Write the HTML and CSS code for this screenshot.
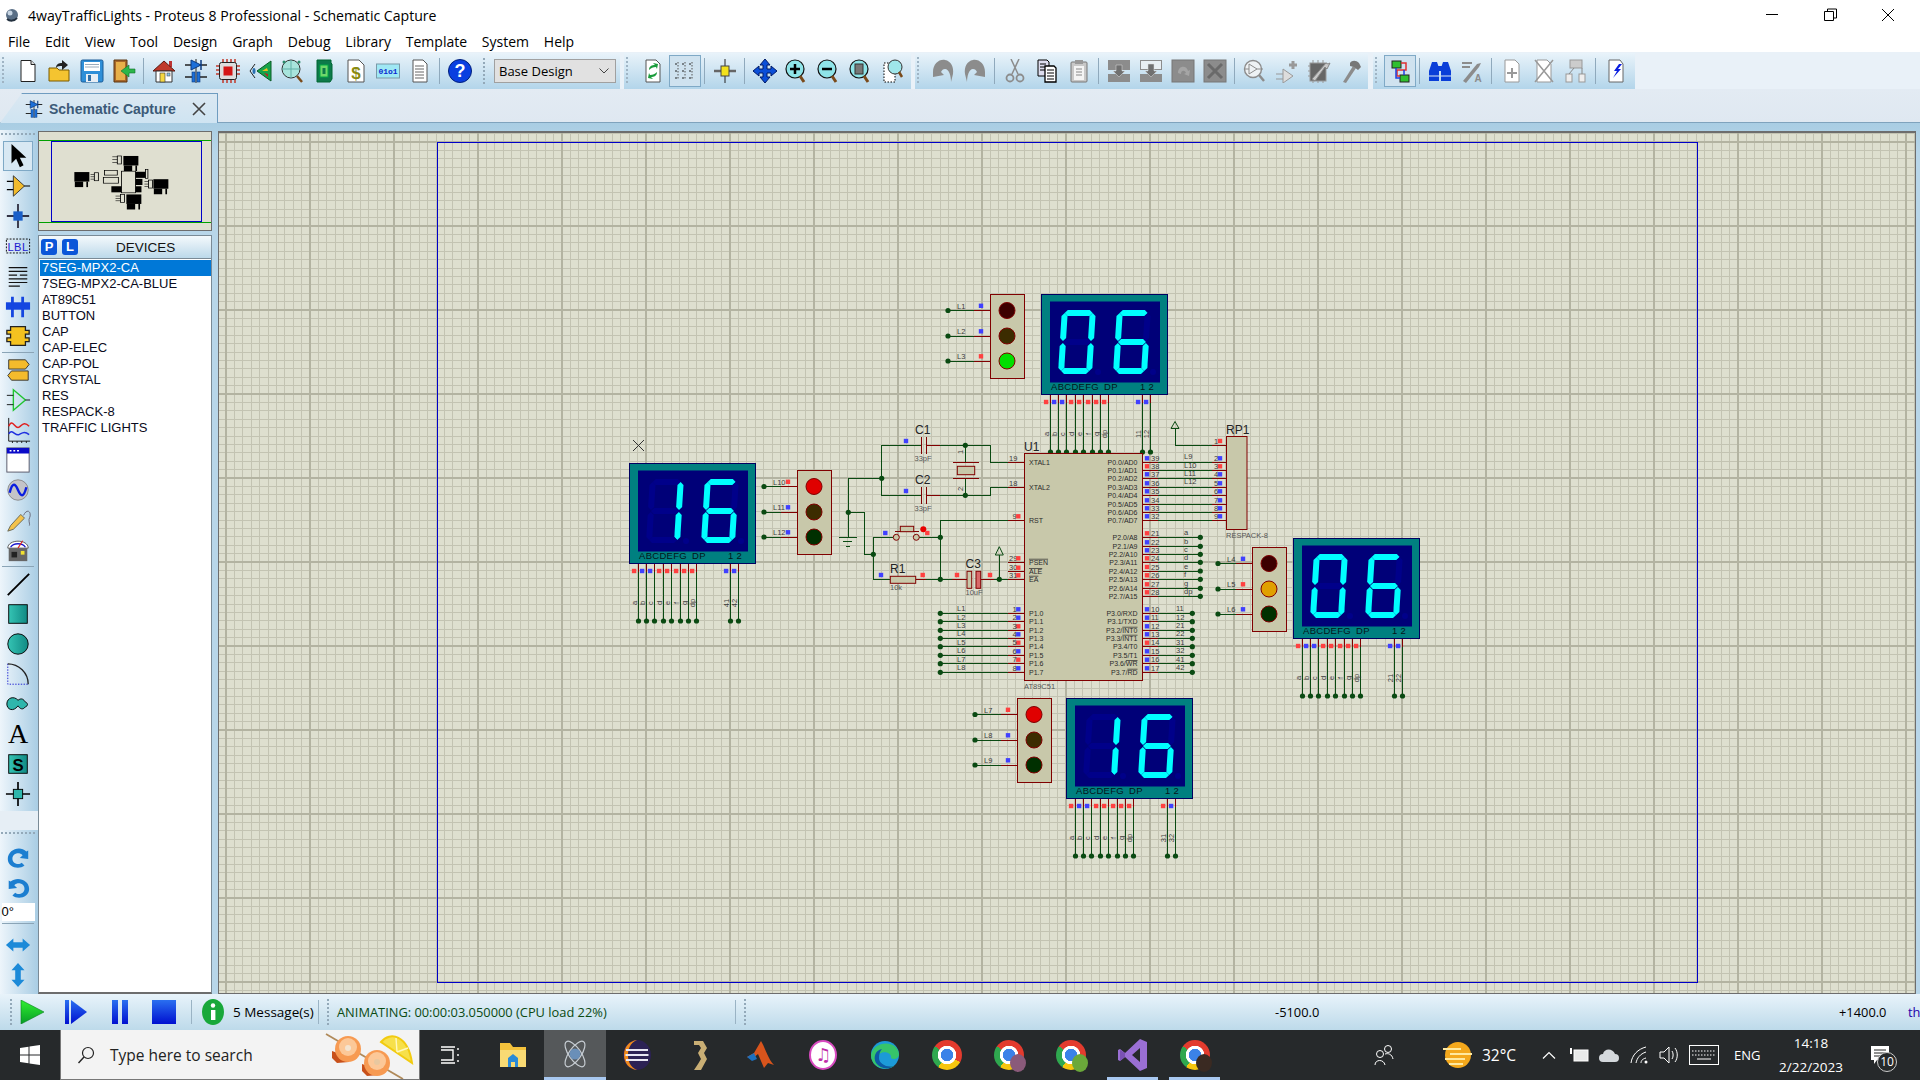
FILE: index.html
```html
<!DOCTYPE html>
<html>
<head>
<title>4wayTrafficLights - Proteus 8 Professional - Schematic Capture</title>
<link rel="stylesheet" href="styles.css">
</head>
<body>

<div class="titlebar">
  <svg class="app-icon" width="16" height="16" viewBox="0 0 16 16"><circle cx="8" cy="8" r="6" fill="#5a6f86"/><circle cx="6" cy="6" r="2.5" fill="#c8d6e4"/><path d="M3 12a7 7 0 0 0 10-1" stroke="#23303e" stroke-width="2" fill="none"/></svg>
  <span class="title-text">4wayTrafficLights - Proteus 8 Professional - Schematic Capture</span>
  <div class="win-controls">
    <svg width="58" height="28" viewBox="0 0 58 28"><path d="M23 13.5h12" stroke="#000"/></svg>
    <svg width="58" height="28" viewBox="0 0 58 28"><path d="M23.500 10.500h9v9h-9zM26.500 10.500v-2.500h9v9h-3" stroke="#000" fill="none"/></svg>
    <svg width="58" height="28" viewBox="0 0 58 28"><path d="M23 8l12 12M35 8l-12 12" stroke="#000"/></svg>
  </div>
</div>

<div class="menubar">
  <span>File</span><span>Edit</span><span>View</span><span>Tool</span><span>Design</span><span>Graph</span><span>Debug</span><span>Library</span><span>Template</span><span>System</span><span>Help</span>
</div>

<div class="toolrow">
  <div class="toolbar tb-file">
    <span class="tool"><svg viewBox="0 0 24 24"><path d="M5 1.500h10l4 4v17H5z" fill="#fff" stroke="#222"/><path d="M15 1.500v4h4" fill="#ddd" stroke="#222"/></svg></span>
    <span class="tool"><svg viewBox="0 0 24 24"><path d="M1 9h8l2 2h10v11H1z" fill="#f4c430" stroke="#7a5a00"/><path d="M8 9c0-4 3-5 6-5V1l6 5-6 5V7c-2 0-5 0-6 2z" fill="#222"/></svg></span>
    <span class="tool"><svg viewBox="0 0 24 24"><rect x="1" y="1" width="22" height="22" rx="1.500" fill="#2f8fd8" stroke="#1a5a96"/><rect x="4" y="3" width="16" height="9" fill="#fff"/><path d="M5 5.500h14M5 8h14" stroke="#9ab"/><rect x="6" y="15" width="12" height="8" fill="#e8eef4"/><rect x="8" y="16" width="3" height="6" fill="#2f6fa8"/></svg></span>
    <span class="tool"><svg viewBox="0 0 24 24"><path d="M2 1h13v22H2z" fill="#a9682a" stroke="#5a3410"/><path d="M4 3h9v18H4z" fill="#e7b04a"/><path d="M23 12h-6V8l-8 6 8 6v-4h6z" transform="translate(0 -2)" fill="#2cb64a" stroke="#12702a" stroke-width=".6"/></svg></span>
    <span class="sep"></span>
    <span class="tool"><svg viewBox="0 0 24 24"><rect x="17" y="2" width="3" height="6" fill="#b33"/><path d="M1 12L12 2l11 10z" fill="#c0392b" stroke="#5a1a10"/><path d="M4 12h16v11H4z" fill="#fff" stroke="#333"/><rect x="8" y="14" width="5" height="9" fill="#f6d743" stroke="#333" stroke-width=".6"/><rect x="15" y="14" width="3" height="3" fill="#8cc8ee" stroke="#333" stroke-width=".5"/></svg></span>
    <span class="tool"><svg viewBox="0 0 24 24"><use href="#ic-schem"/></svg></span>
    <span class="tool"><svg viewBox="0 0 24 24"><path d="M7 0v4M11 0v4M15 0v4M19 0v4M7 20v4M11 20v4M15 20v4M19 20v4M0 7h4M0 11h4M0 15h4M20 7h4M20 11h4M20 15h4" stroke="#c0392b" stroke-width="1.500"/><rect x="3.500" y="3.500" width="17" height="17" rx="2" fill="#ddd" stroke="#222"/><rect x="7.500" y="7.500" width="9" height="9" fill="#d41616"/></svg></span>
    <span class="tool"><svg viewBox="0 0 24 24"><path d="M9 12L23 2v20z" fill="#16a34a" stroke="#0b5a26"/><path d="M14 12l5-3 1 3z" fill="#e8c020"/><path d="M16 14l4 1v3z" fill="#c02020"/><path d="M7 5L2 12l5 7" fill="none" stroke="#222"/><ellipse cx="6" cy="12" rx="1.500" ry="3" fill="#2a6fb0"/></svg></span>
    <span class="tool"><svg viewBox="0 0 24 24"><circle cx="11" cy="10" r="9" fill="#a8e4dc" stroke="#333"/><path d="M11 1v18M2 10h18" stroke="#60b0a8"/><circle cx="4" cy="3" r="1.500" fill="#2a8a6a"/><circle cx="19" cy="3" r="1.500" fill="#2a8a6a"/><path d="M17 17l5 6" stroke="#7a4a1a" stroke-width="2.500"/></svg></span>
    <span class="tool"><svg viewBox="0 0 24 24"><path d="M5 1h14v3l1 1v15l-2 3H5z" fill="#0d7a4a" stroke="#063"/><rect x="8" y="6" width="8" height="12" fill="#6fd86a" stroke="#0a4"/><rect x="10.500" y="9" width="3" height="6" fill="#0d7a4a"/></svg></span>
    <span class="tool"><svg viewBox="0 0 24 24"><path d="M4 1h11l5 5v17H4z" fill="#fff" stroke="#555"/><text x="12" y="20" class="ic-dollar">$</text></svg></span>
    <span class="tool"><svg viewBox="0 0 24 24"><rect x=".500" y="5" width="23" height="14" fill="#9fe8f4" stroke="#7a99a8"/><text x="12" y="15" class="ic-bin">01o1</text></svg></span>
    <span class="tool"><svg viewBox="0 0 24 24"><path d="M5 1h10l4 4v18H5z" fill="#fff" stroke="#555"/><path d="M7 7h9M7 10h9M7 13h9M7 16h9M7 19h9" stroke="#666"/></svg></span>
    <span class="sep"></span>
    <span class="tool tool-help"><svg viewBox="0 0 24 24"><circle cx="12" cy="12" r="11.500" fill="#0a3fe0" stroke="#02207a"/><text x="12" y="18" class="ic-help">?</text></svg></span>
    <span class="grip grip-design"></span>
    <div class="combo"><span>Base Design</span><svg width="10" height="6" viewBox="0 0 10 6"><path d="M.5.5L5 5 9.500.5" fill="none" stroke="#444"/></svg></div>
  </div>

  <div class="toolbar tb-view">
    <span class="tool"><svg viewBox="0 0 24 24"><path d="M5 1h10l4 4v18H5z" fill="#fff" stroke="#555"/><path d="M8 11c0-4 3-5 6-5l-2-2 5 1-1 5-1-2c-3 0-5 1-7 3z" fill="#1c9c3c"/><path d="M16 13c0 4-3 5-6 5l2 2-5-1 1-5 1 2c3 0 5-1 7-3z" fill="#1c9c3c"/></svg></span>
    <span class="tool on"><svg viewBox="0 0 24 24"><path d="M5 3v18M12 3v18M19 3v18" stroke="#555" stroke-dasharray="1.500 1.500"/><path d="M2 5h20M2 12h20M2 19h20" stroke="#222" stroke-dasharray="2 5"/></svg></span>
    <span class="sep"></span>
    <span class="tool"><svg viewBox="0 0 24 24"><path d="M12 0v24" stroke="#222"/><path d="M1 12h22" stroke="#666" stroke-width="2.500"/><rect x="8" y="7" width="8" height="10" fill="#f3e21c" stroke="#444"/></svg></span>
    <span class="sep"></span>
    <span class="tool"><svg viewBox="0 0 24 24"><path d="M12 0l5 6h-3v4h4V7l6 5-6 5v-3h-4v4h3l-5 6-5-6h3v-4H6v3l-6-5 6-5v3h4V6H7z" fill="#0b4fd8" stroke="#001a66"/></svg></span>
    <span class="tool"><svg viewBox="0 0 24 24"><use href="#ic-lens"/><path d="M5 10h10M10 5v10" stroke="#000" stroke-width="2.500"/></svg></span>
    <span class="tool"><svg viewBox="0 0 24 24"><use href="#ic-lens"/><path d="M5 10h10" stroke="#000" stroke-width="2.500"/></svg></span>
    <span class="tool"><svg viewBox="0 0 24 24"><use href="#ic-lens"/><rect x="6" y="5" width="8" height="10" fill="#777" stroke="#333"/></svg></span>
    <span class="tool"><svg viewBox="0 0 24 24"><rect x="3" y="4" width="11" height="19" fill="#fff" stroke="#000" stroke-dasharray="1.500 1.500"/><circle cx="14" cy="8" r="7" fill="#9fe6ea" stroke="#333"/><path d="M18 13l3 5" stroke="#7a4a1a" stroke-width="2.500"/></svg></span>
  </div>

  <div class="toolbar tb-edit">
    <span class="tool"><svg viewBox="0 0 24 24"><path d="M2 13C2 5 8 0 14 1c6 1 9 7 8 14l-2 8c0-6-2-13-6-13-2 0-3 1-4 3l3 3-11 2z" fill="#8c8c8c"/></svg></span>
    <span class="tool"><svg viewBox="0 0 24 24"><path d="M22 13C22 5 16 0 10 1 4 2 1 8 2 15l2 8c0-6 2-13 6-13 2 0 3 1 4 3l-3 3 11 2z" fill="#8c8c8c"/></svg></span>
    <span class="sep"></span>
    <span class="tool"><svg viewBox="0 0 24 24"><path d="M8 0l7 15M16 0L9 15" stroke="#8c8c8c" stroke-width="1.500"/><circle cx="7" cy="19" r="3.500" fill="none" stroke="#8c8c8c" stroke-width="1.800"/><circle cx="17" cy="19" r="3.500" fill="none" stroke="#8c8c8c" stroke-width="1.800"/></svg></span>
    <span class="tool"><svg viewBox="0 0 24 24"><path d="M3 1h9l2 2v14H3z" fill="#dde" stroke="#000"/><path d="M5 5h6M5 8h6M5 11h6" stroke="#000"/><path d="M10 7h9l2 2v14H10z" fill="#fff" stroke="#000" stroke-width="1.300"/><path d="M12 11h7M12 14h7M12 17h7M12 20h7" stroke="#000"/></svg></span>
    <span class="tool"><svg viewBox="0 0 24 24"><rect x="4" y="3" width="16" height="20" rx="1" fill="#c8c8c8" stroke="#777"/><rect x="8" y="1" width="8" height="4" fill="#999"/><rect x="7" y="7" width="10" height="14" fill="#f4f4f4"/><path d="M9 10h6M9 13h6M9 16h6" stroke="#888"/></svg></span>
    <span class="sep"></span>
    <span class="tool"><svg viewBox="0 0 24 24"><rect x="1" y="1" width="22" height="10" fill="#8c8c8c"/><rect x="1" y="15" width="22" height="8" fill="#8c8c8c"/><path d="M9 6h6v6h3l-6 6-6-6h3z" fill="#707070" stroke="#ddd" stroke-width=".5"/></svg></span>
    <span class="tool"><svg viewBox="0 0 24 24"><rect x="1.500" y="1.500" width="21" height="9" fill="#e8eef2" stroke="#8c8c8c"/><rect x="1" y="15" width="22" height="8" fill="#8c8c8c"/><path d="M9 5h6v7h3l-6 6-6-6h3z" fill="#707070" stroke="#ddd" stroke-width=".5"/></svg></span>
    <span class="tool"><svg viewBox="0 0 24 24"><rect x="1" y="1" width="22" height="22" fill="#8c8c8c" stroke="#777"/><path d="M7 14c0-8 9-8 10-2l2-1-1 6-5-2 2-1c-1-3-5-3-5 1z" fill="#a5a5a5"/></svg></span>
    <span class="tool"><svg viewBox="0 0 24 24"><rect x="1" y="1" width="22" height="22" fill="#8c8c8c" stroke="#777"/><path d="M5 5l14 14M19 5L5 19" stroke="#6a6a6a" stroke-width="3"/></svg></span>
    <span class="sep"></span>
    <span class="tool"><svg viewBox="0 0 24 24"><circle cx="10" cy="10" r="8.500" fill="#eef2f4" stroke="#8c8c8c" stroke-width="1.400"/><path d="M6 5l8 5-8 5zM2 10h4M14 10h6" fill="none" stroke="#8c8c8c"/><path d="M16 16l5 6" stroke="#8c8c8c" stroke-width="2.500"/></svg></span>
    <span class="tool"><svg viewBox="0 0 24 24"><path d="M8 10l10 7-10 7z" fill="#ddd" stroke="#999"/><path d="M1 15h7M1 20h7" stroke="#999"/><path d="M14 6h8M18 2v8" stroke="#999" stroke-width="3"/></svg></span>
    <span class="tool"><svg viewBox="0 0 24 24"><rect x="3" y="4" width="16" height="18" fill="#666" stroke="#999"/><path d="M1 7h2M1 12h2M1 17h2M6 1v3M11 1v3M16 1v3M6 22v2M11 22v2M16 22v2" stroke="#999"/><path d="M5 20L19 4l2 1 2-1-3 6-2-2L8 22z" fill="#c8c8c8" stroke="#888"/></svg></span>
    <span class="tool"><svg viewBox="0 0 24 24"><path d="M4 23L14 7l3 2L7 24z" fill="#8c8c8c"/><path d="M11 4c2-3 6-3 9 0l2 4-3 3-4-3-4-1z" fill="#777"/></svg></span>
  </div>

  <div class="toolbar tb-sheet">
    <span class="tool on"><svg viewBox="0 0 24 24"><rect x="4" y="2" width="9" height="7" fill="#30c030" stroke="#222"/><rect x="12" y="16" width="9" height="7" fill="#30c030" stroke="#222"/><path d="M13 4h5v7h-9v6h3" fill="none" stroke="#e03030" stroke-width="1.500"/><path d="M8 9v10h4M16 16v-5" fill="none" stroke="#2040e0" stroke-width="1.500"/></svg></span>
    <span class="sep"></span>
    <span class="tool"><svg viewBox="0 0 24 24"><path d="M4 3h5l2 6v13H1V12z" fill="#0a3ed8"/><path d="M20 3h-5l-2 6v13h10V12z" fill="#0a3ed8"/><path d="M1 17h10M13 17h10" stroke="#dce8f4"/><rect x="10" y="7" width="4" height="5" fill="#0a3ed8"/></svg></span>
    <span class="tool"><svg viewBox="0 0 24 24"><path d="M3 22L17 5l4-1-2 4L6 24z" fill="#8c8c8c"/><path d="M2 4h10M2 8h8" stroke="#8c8c8c" stroke-width="2"/><text x="18" y="23" class="ic-a">A</text></svg></span>
    <span class="sep"></span>
    <span class="tool"><svg viewBox="0 0 24 24"><path d="M5 1h10l4 4v18H5z" fill="#fff" stroke="#999"/><path d="M7 14h10M12 9v10" stroke="#999" stroke-width="2"/></svg></span>
    <span class="tool"><svg viewBox="0 0 24 24"><path d="M5 1h10l4 4v18H5z" fill="#fff" stroke="#999"/><path d="M3 1l18 22M21 1L3 23" stroke="#999" stroke-width="1.500"/></svg></span>
    <span class="tool"><svg viewBox="0 0 24 24"><rect x="6" y="1" width="12" height="8" fill="#ccc" stroke="#999"/><rect x="2" y="15" width="6" height="8" fill="#eee" stroke="#999"/><rect x="15" y="15" width="6" height="8" fill="#eee" stroke="#999"/><path d="M10 9l-5 6M18 9v6" stroke="#888"/></svg></span>
    <span class="sep"></span>
    <span class="tool"><svg viewBox="0 0 24 24"><path d="M5 1h11l3 4v18H5z" fill="#fff" stroke="#666"/><path d="M15 5l-5 7h3l-4 7 8-9h-3l4-5z" fill="#0a1ee0"/></svg></span>
  </div>
</div>

<svg class="defs" width="0" height="0">
  <defs>
    <g id="ic-schem">
      <path d="M12 0v24" stroke="#222" stroke-width="1"/>
      <path d="M1 6h22M1 18h7M16 18h7" stroke="#222" stroke-width="1.300"/>
      <path d="M7 1l10 5-10 5z" fill="#1c6fd8" stroke="#0a3a80"/>
      <path d="M17 1v10" stroke="#0a3a80" stroke-width="1.500"/>
      <rect x="8" y="13" width="3" height="10" fill="#1c6fd8" stroke="#0a3a80" stroke-width=".6"/>
      <rect x="13" y="13" width="3" height="10" fill="#1c6fd8" stroke="#0a3a80" stroke-width=".6"/>
    </g>
    <g id="ic-lens">
      <circle cx="10" cy="10" r="9" fill="#8fe4e8" stroke="#111" stroke-width="1.200"/>
      <path d="M15 17l4 6" stroke="#7a4a1a" stroke-width="3"/>
    </g>
    <linearGradient id="teal" x1="0" x2="1"><stop offset="0" stop-color="#35c4b4"/><stop offset="1" stop-color="#108a84"/></linearGradient>
    <linearGradient id="blue-v" x1="0" x2="0" y2="1"><stop offset="0" stop-color="#2a6ff0"/><stop offset="1" stop-color="#0010d0"/></linearGradient>
    <linearGradient id="green-v" x1="0" x2="0" y2="1"><stop offset="0" stop-color="#30f030"/><stop offset="1" stop-color="#089c28"/></linearGradient>
  </defs>
</svg>

<div class="tabrow">
  <div class="tab">
    <svg width="18" height="20" viewBox="0 0 24 24"><use href="#ic-schem"/></svg>
    <span class="tab-label">Schematic Capture</span>
    <svg width="14" height="14" viewBox="0 0 14 14"><path d="M1 1l12 12M13 1L1 13" stroke="#444" stroke-width="1.600"/></svg>
  </div>
</div>

<div class="workspace">
  <div class="modebar">
    <span class="grip-h"></span>
    <span class="mode on"><svg viewBox="0 0 28 28"><path d="M7 1v21l5-5 4 9 4-2-4-8h7z" fill="#000"/></svg></span>
    <span class="mode"><svg viewBox="0 0 28 28"><path d="M2 9h8M2 18h8M20 14h7" stroke="#000" stroke-width="1.300"/><path d="M9 3l12 11L9 25z" fill="#f2bb2c" stroke="#333"/></svg></span>
    <span class="mode"><svg viewBox="0 0 28 28"><path d="M14 1v26M2 14h24" stroke="#334" stroke-width="2"/><rect x="9" y="9" width="10" height="10" fill="#1a5fc8"/></svg></span>
    <span class="mode"><svg viewBox="0 0 28 28"><rect x="1.500" y="6.500" width="25" height="15" fill="none" stroke="#000" stroke-dasharray="2 1.500"/><text x="14" y="19" class="ic-lbl">LBL</text></svg></span>
    <span class="mode"><svg viewBox="0 0 28 28"><path d="M4 5h20M4 9h20M4 13h9M16 13h8M4 17h20M4 21h20M4 25h12" stroke="#111" stroke-width="1.300"/></svg></span>
    <span class="mode"><svg viewBox="0 0 28 28"><rect x="1" y="10" width="26" height="8" fill="#1446e0"/><path d="M8 4v22M19 4v22" stroke="#1446e0" stroke-width="3"/></svg></span>
    <span class="mode"><svg viewBox="0 0 28 28"><path d="M6 4h16v4h4v4h-4v4h4v4h-4v4H6v-4H2v-4h4v-4H2V8h4z" fill="#f4c220" stroke="#222" stroke-width="1.400"/></svg></span>
    <span class="hr hr-top"></span>
    <span class="mode"><svg viewBox="0 0 28 28"><path d="M4 3h18l4 5-4 5H4z" fill="#f4bb2c" stroke="#333"/><path d="M25 15H7l-4 5 4 5h18z" fill="#f4bb2c" stroke="#333"/></svg></span>
    <span class="mode"><svg viewBox="0 0 28 28"><path d="M9 3l13 11L9 25z" fill="none" stroke="#1fc431" stroke-width="1.500"/><path d="M2 9h7M2 19h7M22 14h5" stroke="#111"/></svg></span>
    <span class="mode"><svg viewBox="0 0 28 28"><path d="M4 1v25h23M8 26v2M13 26v2M18 26v2M23 26v2" stroke="#111" fill="none"/><path d="M4 10c4-10 7 4 11 1s6-6 11-1" stroke="#e02020" fill="none" stroke-width="1.600"/><path d="M4 18c4-6 7 3 11 1s6-4 11 0" stroke="#2030e0" fill="none" stroke-width="1.600"/></svg></span>
    <span class="mode"><svg viewBox="0 0 28 28"><rect x="2" y="1" width="24" height="26" fill="#fff" stroke="#556"/><rect x="2" y="1" width="24" height="6" fill="#0a0ac8"/><path d="M5 4h2M9 4h2M13 4h2" stroke="#fff" stroke-width="1.500"/></svg></span>
    <span class="mode"><svg viewBox="0 0 28 28"><circle cx="14" cy="14" r="11" fill="#c4c4c8" stroke="#888"/><path d="M5 17c3-12 6-10 9-3s6 9 9-3" stroke="#0a1ee0" stroke-width="2.600" fill="none"/></svg></span>
    <span class="mode"><svg viewBox="0 0 28 28"><path d="M3 26l3-6L17 8l4 4L9 24z" fill="#f4c24a" stroke="#665"/><path d="M20 9c2-5 6-6 7-2s-2 5-1 9 0 4 0 4" stroke="#667" fill="none"/></svg></span>
    <span class="mode"><svg viewBox="0 0 28 28"><path d="M3 12C3 2 25 2 25 12z" fill="#fff" stroke="#555"/><path d="M6 11c3-5 13-5 16 0" fill="none" stroke="#1a1ad0" stroke-width="1.400"/><path d="M14 12l5-8" stroke="#e02020" stroke-width="1.200"/><rect x="4" y="12" width="20" height="14" fill="#666"/><rect x="7" y="16" width="6" height="6" fill="#222"/><rect x="17" y="15" width="4" height="4" fill="#f0e030"/></svg></span>
    <span class="hr hr-low"></span>
    <span class="mode"><svg viewBox="0 0 28 28"><path d="M3 26L26 3" stroke="#000" stroke-width="2"/></svg></span>
    <span class="mode"><svg viewBox="0 0 28 28"><rect x="4" y="4" width="20" height="20" fill="url(#teal)" stroke="#000"/></svg></span>
    <span class="mode"><svg viewBox="0 0 28 28"><circle cx="14" cy="14" r="11" fill="url(#teal)" stroke="#000"/></svg></span>
    <span class="mode"><svg viewBox="0 0 28 28"><path d="M3 3v22h22" fill="none" stroke="#1a1ad0" stroke-dasharray="1.500 1.500"/><path d="M3 3c12 0 22 10 22 22" fill="none" stroke="#222" stroke-width="1.400"/></svg></span>
    <span class="mode"><svg viewBox="0 0 28 28"><path d="M2 14c0-7 8-9 12-4 4-3 6-1 8 2 3 1 3 4 0 5-3 4-6 2-8-1-5 7-12 4-12-2z" fill="#2fb6ac" stroke="#000"/></svg></span>
    <span class="mode"><span class="ic-big-a">A</span></span>
    <span class="mode"><svg viewBox="0 0 28 28"><rect x="4" y="4" width="20" height="20" fill="url(#teal)" stroke="#000"/><text x="14" y="21" class="ic-s">S</text></svg></span>
    <span class="mode"><svg viewBox="0 0 28 28"><path d="M14 1v26M1 14h26" stroke="#000" stroke-width="1.800"/><rect x="9" y="9" width="10" height="10" fill="#2fb6ac" stroke="#000"/></svg></span>
    <span class="strip"></span>
    <span class="grip-h"></span>
    <span class="mode mode-first"><svg viewBox="0 0 28 28"><path d="M23 7C16 0 3 5 3 15c0 9 12 12 18 7l-3-3c-3 3-10 1-10-4 0-6 7-8 11-4l-3 3 9 1V6z" fill="#1c7ed0"/></svg></span>
    <span class="mode"><svg viewBox="0 0 28 28"><path d="M6 7c7-6 20-2 20 8 0 9-12 12-18 7l3-3c3 3 10 1 10-4 0-6-7-8-11-4l3 3-9 1V6z" fill="#1c7ed0"/></svg></span>
    <span class="angle">0°</span>
    <span class="hr"></span>
    <span class="mode mode-flip"><svg viewBox="0 0 28 28"><path d="M1 14l8-7v4h10V7l8 7-8 7v-4H9v4z" fill="#1c8ad8"/></svg></span>
    <span class="mode"><svg viewBox="0 0 28 28"><path d="M14 1l7 8h-4v10h4l-7 8-7-8h4V9H7z" fill="#1c8ad8"/></svg></span>
  </div>

  <div class="sidepanel">
    <div class="preview">
      <svg width="172" height="98" viewBox="0 0 172 98">
        <path d="M0 8.500h172M0 90.500h172" stroke="#00a000"/>
        <rect x="12.500" y="9.500" width="150" height="80" fill="none" stroke="#0000c8"/>
        <g class="mini" transform="translate(12.500 9.500) scale(.119 .0952) translate(-437 -142)">
          <rect x="629" y="463" width="126" height="100"/><rect x="633" y="563" width="70" height="58"/><rect x="730" y="563" width="14" height="58"/>
          <rect x="1041" y="294" width="126" height="100"/><rect x="1045" y="394" width="70" height="58"/><rect x="1142" y="394" width="14" height="58"/>
          <rect x="1293" y="538" width="126" height="100"/><rect x="1297" y="638" width="70" height="58"/><rect x="1394" y="638" width="14" height="58"/>
          <rect x="1066" y="698" width="126" height="100"/><rect x="1070" y="798" width="70" height="58"/><rect x="1167" y="798" width="14" height="58"/>
          <rect class="mini-box" x="990" y="294" width="34" height="84"/><rect class="mini-box" x="797" y="470" width="34" height="84"/>
          <rect class="mini-box" x="1252" y="547" width="33" height="84"/><rect class="mini-box" x="1017" y="698" width="33" height="84"/>
          <rect x="948" y="300" width="42" height="6"/><rect x="948" y="330" width="42" height="6"/><rect x="948" y="358" width="42" height="6"/>
          <rect x="765" y="484" width="32" height="6"/><rect x="765" y="510" width="32" height="6"/><rect x="765" y="534" width="32" height="6"/>
          <rect x="1218" y="560" width="34" height="6"/><rect x="1218" y="586" width="34" height="6"/><rect x="1218" y="610" width="34" height="6"/>
          <rect x="975" y="712" width="42" height="6"/><rect x="975" y="738" width="42" height="6"/><rect x="975" y="762" width="42" height="6"/>
          <rect class="mini-box" x="1025" y="454" width="118" height="227"/>
          <rect x="1143" y="460" width="84" height="64"/><rect class="mini-box" x="1227" y="437" width="20" height="92"/>
          <rect x="1143" y="535" width="58" height="64"/><rect x="1143" y="612" width="50" height="64"/><rect x="940" y="612" width="84" height="64"/>
          <rect class="mini-box" x="882" y="445" width="108" height="50"/><rect class="mini-box" x="873" y="520" width="126" height="60"/>
        </g>
      </svg>
    </div>
    <div class="devices">
      <div class="devices-head">
        <span class="badge">P</span><span class="badge">L</span>
        <span class="devices-title">DEVICES</span>
      </div>
      <ul class="device-list">
        <li class="selected">7SEG-MPX2-CA</li>
        <li>7SEG-MPX2-CA-BLUE</li>
        <li>AT89C51</li>
        <li>BUTTON</li>
        <li>CAP</li>
        <li>CAP-ELEC</li>
        <li>CAP-POL</li>
        <li>CRYSTAL</li>
        <li>RES</li>
        <li>RESPACK-8</li>
        <li>TRAFFIC LIGHTS</li>
      </ul>
    </div>
  </div>

  <div class="sheet">
    <svg id="sheet" width="1696" height="861" viewBox="219 132 1696 861"></svg>
  </div>
</div>

<div class="statusbar">
  <span class="grip"></span>
  <svg class="play" width="24" height="24" viewBox="0 0 24 24"><path d="M1 0l23 12L1 24z" fill="url(#green-v)" stroke="#0a8020" stroke-width=".6"/></svg>
  <svg class="play" width="24" height="24" viewBox="0 0 24 24"><path d="M1 0h4v24H1z" fill="url(#blue-v)"/><path d="M7 0l16 12L7 24z" fill="url(#blue-v)"/></svg>
  <svg class="play" width="24" height="24" viewBox="0 0 24 24"><path d="M4 0h6v24H4zM14 0h6v24h-6z" fill="url(#blue-v)"/></svg>
  <svg class="play play-last" width="24" height="24" viewBox="0 0 24 24"><rect y="0" width="24" height="24" fill="url(#blue-v)"/></svg>
  <span class="status-sep"></span>
  <svg class="info" width="24" height="26" viewBox="0 0 24 26"><ellipse cx="12" cy="13" rx="11" ry="13" fill="#18a83a"/><circle cx="12" cy="6.500" r="2.200" fill="#fff"/><path d="M10 11h4.400v10H10z" fill="#fff"/></svg>
  <span class="messages">5 Message(s)</span>
  <span class="status-sep"></span>
  <span class="grip"></span>
  <span class="anim">ANIMATING: 00:00:03.050000 (CPU load 22%)</span>
  <span class="status-sep"></span>
  <span class="grip"></span>
  <span class="coord-x">-5100.0</span>
  <span class="coord-y">+1400.0</span>
  <span class="unit">th</span>
</div>

<div class="taskbar">
  <div class="start"><svg width="20" height="20" viewBox="0 0 20 20"><path d="M0 3l8.500-1.200v7.700H0zM9.500 1.600L20 0v9.500H9.500zM0 10.500h8.500v7.700L0 17zM9.500 10.500H20V20L9.500 18.400z" fill="#fff"/></svg></div>
  <div class="search">
    <svg width="18" height="18" viewBox="0 0 18 18"><circle cx="11" cy="7" r="5.500" fill="none" stroke="#222" stroke-width="1.200"/><path d="M7 11l-5.500 6" stroke="#222" stroke-width="1.400"/></svg>
    <span class="search-text">Type here to search</span>
    <svg class="search-art" width="92" height="49" viewBox="0 0 92 49">
      <path d="M2 4l77 45" stroke="#b08a5a" stroke-width="1.800"/>
      <path d="M8 21l14 5 3 6-12 1-5-5z" fill="#c8501a"/>
      <circle cx="24" cy="19" r="13" fill="#f79a52"/><circle cx="24" cy="17" r="9" fill="#fcc898"/><circle cx="24" cy="18" r="3" fill="#f4e4d0"/>
      <path d="M38 34l14 5 3 6-12 1-5-5z" fill="#c8501a"/>
      <circle cx="53" cy="33" r="13" fill="#f79a52"/><circle cx="53" cy="31" r="9" fill="#fcc898"/><circle cx="53" cy="32" r="3" fill="#e8c8a0"/>
      <path d="M57 12C66 1 84 5 88 33z" fill="#f7e04a" stroke="#f2cb10" stroke-width="2"/><path d="M72 8l1 14M84 18L73 22" stroke="#fff8c0" stroke-width="1.400"/>
    </svg>
  </div>
  <span class="task"><svg width="20" height="20" viewBox="0 0 20 20"><path d="M0 2h14M0 18h14M0 5h12v10H0M17 3v2M17 9v2M17 15v2" fill="none" stroke="#fff" stroke-width="1.400"/></svg></span>
  <span class="task"><svg width="28" height="26" viewBox="0 0 28 26"><path d="M1 1h10l3 4h13v20H1z" fill="#f4c23c"/><path d="M1 8h26v17H1z" fill="#f9da73"/><path d="M9 16l5-4 5 4v9h-3v-5h-4v5H9z" fill="#2a8ad8"/></svg></span>
  <span class="task task-active"><svg width="30" height="30" viewBox="0 0 30 30"><g fill="none" stroke="#c6ccd2" stroke-width="1.200"><ellipse cx="15" cy="15" rx="6" ry="15" transform="rotate(-35 15 15)"/><ellipse cx="15" cy="15" rx="6" ry="15" transform="rotate(35 15 15)"/></g><circle cx="15" cy="15" r="5.500" fill="#6a8fb8"/></svg></span>
  <span class="task"><svg width="30" height="32" viewBox="0 0 30 32"><ellipse cx="15" cy="16" rx="14" ry="15" fill="#2c2255"/><path d="M2 16C2 8 7 2 15 1 8 4 6 10 6 16s2 12 9 15C7 30 2 24 2 16z" fill="#f08a1c"/><path d="M4 11h22M3.500 16h23M4 21h22" stroke="#e8e8f4" stroke-width="2.200"/></svg></span>
  <span class="task"><svg width="18" height="32" viewBox="0 0 18 32"><path d="M4 2h9l4 7-3 5 3 6-6 11H4l4-6 3-5-3-6 3-5-2-3H4z" fill="#c9ae74"/></svg></span>
  <span class="task"><svg width="30" height="30" viewBox="0 0 30 30"><path d="M1 17l7-4 7-12c4 6 7 18 13 24l-6-2-4 5-6-14-6 5z" fill="#d8541c"/><path d="M1 17l7-4 3 6-5 2z" fill="#1c70c0"/></svg></span>
  <span class="task"><span class="itunes">&#9835;</span></span>
  <span class="task"><svg width="30" height="30" viewBox="0 0 30 30"><circle cx="15" cy="15" r="14" fill="#1c9ad8"/><path d="M1 15C3 1 27-1 29 14c0 5-6 6-8 4 1-7-13-8-13 0 0 5 8 11 16 8-6 5-23 3-23-11z" fill="#36c46a"/><path d="M9 18c0 6 8 10 15 8-5 4-14 3-18-3-3-5-1-13 6-14-2 2-3 5-3 9z" fill="#0c59a4"/></svg></span>
  <span class="task"><span class="chrome"></span></span>
  <span class="task"><span class="chrome"><span class="chrome-badge badge-a"></span></span></span>
  <span class="task"><span class="chrome"><span class="chrome-badge badge-b"></span></span></span>
  <span class="task task-open"><svg width="30" height="32" viewBox="0 0 30 32"><path d="M22 0l7 3v26l-7 3-15-14-5 4-2-1V11l2-1 5 4zM22 9l-8 7 8 7z" fill="#9a6fd4"/><path d="M2 11l5 3v4l-5 4z" fill="#7a52b4"/></svg></span>
  <span class="task task-open"><span class="chrome"><span class="chrome-badge badge-c"></span></span></span>

  <div class="tray">
    <span class="tray-people"><svg width="20" height="22" viewBox="0 0 20 22"><circle cx="6" cy="10" r="3.500" fill="none" stroke="#fff"/><path d="M1 21c0-6 9-6 10 0" fill="none" stroke="#fff"/><circle cx="14" cy="5" r="3.500" fill="none" stroke="#fff"/><path d="M11 10c3-1 7 0 8 5" fill="none" stroke="#fff"/></svg></span>
    <span class="tray-weather"><svg width="30" height="28" viewBox="0 0 30 28"><circle cx="15" cy="14" r="13" fill="#f4a81c"/><path d="M0 8h18M7 13h22M2 18h20M6 23h14" stroke="#ffe9a0" stroke-width="2"/></svg></span>
    <span class="tray-temp">32°C</span>
    <span class="tray-icon tray-first"><svg width="14" height="8" viewBox="0 0 14 8"><path d="M1 7.500l6-6 6 6" fill="none" stroke="#fff" stroke-width="1.200"/></svg></span>
    <span class="tray-icon"><svg width="20" height="16" viewBox="0 0 20 16"><rect x="5" y="3" width="14" height="11" fill="#fff" fill-opacity=".9" stroke="#fff"/><path d="M2 1v6" stroke="#fff" stroke-width="2"/></svg></span>
    <span class="tray-icon"><svg width="22" height="16" viewBox="0 0 22 16"><path d="M5 15a4 4 0 0 1 0-8c1-6 10-6 12 0a4 4 0 0 1 0 8z" fill="#d4d8dc"/></svg></span>
    <span class="tray-icon"><svg width="20" height="18" viewBox="0 0 20 18"><path d="M2 17C3 9 9 3 17 1M7 17c1-5 4-9 10-11M12 17c0-2 1-4 5-5" fill="none" stroke="#fff"/><circle cx="17" cy="16" r="1.500" fill="#fff"/></svg></span>
    <span class="tray-icon"><svg width="20" height="20" viewBox="0 0 20 20"><path d="M1 7h4l5-5v16l-5-5H1z" fill="none" stroke="#fff"/><path d="M13 6c1.500 2 1.500 6 0 8M16 3c3 4 3 10 0 14" fill="none" stroke="#fff"/></svg></span>
    <span class="tray-kbd"><svg width="30" height="20" viewBox="0 0 30 20"><rect x=".5" y=".5" width="29" height="19" fill="none" stroke="#fff"/><path d="M3 6h24M3 10h24" stroke="#fff" stroke-dasharray="1.500 1.500"/><path d="M8 14h14" stroke="#fff"/></svg></span>
    <span class="tray-lang">ENG</span>
    <span class="clock"><span>14:18</span><span>2/22/2023</span></span>
    <span class="notify"><svg width="20" height="20" viewBox="0 0 20 20"><path d="M1 1h18v14H7l-3 4v-4H1z" fill="#fff"/><path d="M4 5h12M4 8h12M4 11h8" stroke="#222"/></svg><span class="notify-count">10</span></span>
  </div>
</div>

<script src="script.js"></script>
</body>
</html>
```

FILE: styles.css
```css
html, body { margin: 0; padding: 0; }
body { width: 1920px; height: 1080px; overflow: hidden; display: flex; flex-direction: column; background: #fff; color: #000; font-family: "Open Sans", "Noto Sans", sans-serif; }
.defs { position: absolute; }

/* window chrome */
.titlebar { height: 30px; display: flex; align-items: center; padding-left: 4px; background: #fff; flex: none; }
.app-icon { margin-right: 8px; }
.title-text { font-size: 14.100px; }
.win-controls { margin-left: auto; display: flex; gap: 0; margin-right: 3px; }
.menubar { height: 22px; display: flex; align-items: center; gap: 14.800px; padding-left: 8px; font-size: 14px; background: #fff; flex: none; }

/* toolbars */
.toolrow { height: 37px; flex: none; display: flex; background: #e9f1f8; }
.toolbar { display: flex; align-items: center; height: 36px; margin-top: 1px; background: linear-gradient(#e9f3fa, #b3d5ea); background-repeat: no-repeat; position: relative; }
.toolbar::before { content: ""; position: absolute; left: 2px; top: 4px; bottom: 4px; width: 2px; background: repeating-linear-gradient(#9fb4c4 0 2px, transparent 2px 4px); }
.tb-file { width: 620px; padding-left: 12px; box-sizing: border-box; }
.tb-view { width: 287px; margin-left: 4px; padding-left: 13px; box-sizing: border-box; }
.tb-edit { width: 453px; margin-left: 4px; padding-left: 12px; box-sizing: border-box; }
.tb-sheet { width: 262px; margin-left: 5px; padding-left: 11px; box-sizing: border-box; }
.tool { width: 32px; height: 32px; box-sizing: border-box; display: flex; align-items: center; justify-content: center; flex: none; }
.tool svg { width: 24px; height: 24px; }
.tool.on { background: #cfe2ef; border: 1px solid #7fa9c6; }
.sep { width: 1px; height: 26px; margin: 0 4px 0 3px; background: #8fa9bc; flex: none; }
.grip { width: 2px; height: 26px; background: repeating-linear-gradient(#93a9b9 0 2px, transparent 2px 4px); flex: none; }
.grip-design { margin: 0 9px 0 7px; }
.combo { width: 122px; height: 24px; box-sizing: border-box; background: #e1e1e1; border: 1px solid #a0a0a0; display: flex; align-items: center; justify-content: space-between; padding: 0 6px 0 4px; font-size: 13px; }
.ic-dollar { font: bold 17px "Liberation Sans", sans-serif; fill: #8a8a10; text-anchor: middle; }
.ic-bin { font: bold 8px "Liberation Mono", monospace; fill: #0a2ad0; text-anchor: middle; }
.ic-help { font: bold 18px "Liberation Sans", sans-serif; fill: #fff; text-anchor: middle; }
.ic-a { font: bold 10px "Liberation Sans", sans-serif; fill: #8c8c8c; text-anchor: middle; }

/* tab strip */
.tabrow { height: 34px; flex: none; box-sizing: border-box; background: linear-gradient(#e3ebf3, #dfe8f1); border-bottom: 1px solid #7fa3bd; display: flex; align-items: flex-end; }
.tab { width: 218px; height: 30px; box-sizing: border-box; display: flex; align-items: center; padding-left: 25px; gap: 6px; margin-bottom: -1px; background: linear-gradient(#dbe8f2, #cfe4f2); border: 1px solid #6f9cc0; border-bottom: none; border-left: none; clip-path: polygon(0 100%, 22px 0, 100% 0, 100% 100%); }
.tab-label { font: bold 14px "Liberation Sans", sans-serif; color: #3c5a78; width: 137px; }

/* main area */
.workspace { height: 871px; flex: none; box-sizing: border-box; padding-top: 8px; display: flex; background: linear-gradient(#a9cde3, #b8d6e9 30px); }
.modebar { width: 38px; box-sizing: border-box; padding-right: 2px; flex: none; display: flex; flex-direction: column; align-items: center; margin-top: -1px; background: linear-gradient(90deg, #edf5fb, #a9cde4); }
.grip-h { width: 34px; height: 2px; margin-top: 2px; background: repeating-linear-gradient(90deg, #93a9b9 0 2px, transparent 2px 4px); flex: none; }
.mode { width: 30px; height: 30px; box-sizing: border-box; display: flex; align-items: center; justify-content: center; flex: none; }
.mode svg { width: 26px; height: 26px; }
.modebar > .grip-h:first-child { margin-top: 3px; margin-bottom: 6px; }
.mode.on { background: #d8e8f3; border: 1px solid #7fa9c6; }
.mode-first { margin-top: 9px; }
.mode-flip { margin-top: 3px; }
.hr { width: 32px; height: 1px; margin: 2px 0 3px; background: #8aa4b6; flex: none; }
.hr-top { margin: 1px 0 2px; }
.hr-low { margin: 1px 0 2px; }
.strip { width: 38px; height: 19px; margin-top: 2px; background: #e6eef5; flex: none; align-self: flex-start; }
.angle { width: 33px; height: 18px; box-sizing: border-box; background: #fff; font: 13px "Liberation Sans", sans-serif; line-height: 18px; flex: none; }
.ic-big-a { font: 28px/28px "Liberation Serif", serif; }
.ic-lbl { font: 12px "Liberation Sans", sans-serif; fill: #1a1ad0; text-anchor: middle; letter-spacing: .4px; }
.ic-s { font: bold 18px "Liberation Sans", sans-serif; fill: #000; text-anchor: middle; }

.sidepanel { width: 174px; flex: none; display: flex; flex-direction: column; }
.preview { height: 100px; box-sizing: border-box; background: #dfdfd0; border: 1px solid #6d6d6d; line-height: 0; }
.preview svg { display: block; }
.mini rect { fill: #000; }
.mini .mini-box { fill: none; stroke: #000; stroke-width: 7; }
.devices { margin-top: 4px; flex: 1; display: flex; flex-direction: column; box-sizing: border-box; border: 1px solid #7a8a96; border-bottom: 2px solid #6d6d6d; background: #fff; }
.devices-head { height: 23px; flex: none; display: flex; align-items: center; padding-left: 2px; gap: 5px; background: linear-gradient(#f4f9fc, #bcd9ea); border-bottom: 1px solid #7a8a96; box-sizing: border-box; }
.badge { width: 16px; height: 16px; border-radius: 3px; background: #0b56d8; color: #fff; font: bold 13px/16px "Liberation Sans", sans-serif; text-align: center; }
.devices-title { margin-left: 33px; font: 13.500px "Liberation Sans", sans-serif; color: #111; }
.device-list { list-style: none; margin: 0; padding: 1px 0 0 1px; font: 13px/16px "Liberation Sans", sans-serif; color: #0a0a20; }
.device-list li { padding-left: 2px; height: 16px; }
.device-list .selected { background: #0078d7; color: #fff; }

.sheet { margin-left: 6px; width: 1698px; height: 863px; box-sizing: border-box; flex: none; border: 1px solid #6d6d6d; border-top: 2px solid #6d6d6d; background: #dedfcf; overflow: hidden; }
#sheet { display: block; margin-top: -1px; }
.grid-minor { stroke: #c3c3b2; stroke-width: 1; fill: none; shape-rendering: crispEdges; }
.grid-major { stroke: #b3b3a1; stroke-width: 2; fill: none; shape-rendering: crispEdges; }
.wire { stroke: #0a4a12; stroke-width: 1; fill: none; shape-rendering: crispEdges; }
.stub { stroke: #800000; stroke-width: 1; fill: none; shape-rendering: crispEdges; }
.bound { stroke: #0000c8; stroke-width: 1; fill: none; shape-rendering: crispEdges; }
.body { fill: #c8c8aa; stroke: #800000; stroke-width: 1; }
.t { font-family: "Liberation Sans", sans-serif; font-size: 7px; fill: #2a2a2a; }
.t-pin { font-size: 7.500px; fill: #3a3a3a; }
.t-ref { font-size: 12px; fill: #222; }
.t-val { font-size: 7.500px; fill: #555; }
.t-seg { font-size: 9.500px; fill: #05141a; letter-spacing: .3px; }
.bar { text-decoration: overline; }

/* status bar */
.statusbar { height: 36px; flex: none; box-sizing: border-box; display: flex; align-items: center; padding-left: 2px; background: linear-gradient(#e8f3fa, #bddaea); font-size: 12.850px; }
.play { margin-right: 20px; flex: none; }
.play:first-of-type { margin-left: 8px; }
.play-last { margin-right: 15px; }
.status-sep { width: 1px; height: 24px; background: #9ab3c4; flex: none; }
.info { margin: 0 8px 0 9px; flex: none; }
.messages { width: 85px; flex: none; font-size: 13.500px; white-space: nowrap; }
.statusbar .grip { margin: 0 0 0 8px; }
.anim { margin-left: 8px; width: 398px; flex: none; color: #0a4a12; white-space: nowrap; }
.coord-x { margin-left: 529px; width: 564px; flex: none; }
.coord-y { width: 69px; flex: none; }
.unit { color: #2200aa; }

/* taskbar */
.taskbar { height: 50px; flex: none; display: flex; background: #26292b; color: #fff; }
.start { width: 60px; display: flex; align-items: center; justify-content: center; flex: none; }
.search { width: 360px; flex: none; box-sizing: border-box; background: #f3f3f3; border: 1px solid #777; border-top: none; display: flex; align-items: center; padding-left: 16px; color: #222; overflow: hidden; }
.search-text { margin-left: 15px; font-size: 15.500px; width: 214px; flex: none; }
.search-art { flex: none; }
.task { width: 62px; height: 50px; box-sizing: border-box; display: flex; align-items: center; justify-content: center; flex: none; position: relative; }
.task-active { background: #55585a; border-bottom: 3px solid #a8c8f0; }
.task-open::after { content: ""; position: absolute; left: 5px; right: 6px; bottom: 0; height: 3px; background: #a8c8f0; }
.itunes { width: 28px; height: 30px; border-radius: 50%; background: #fff; border: 2px solid #d84ac0; box-sizing: border-box; color: #c02ca8; font: 18px/26px "DejaVu Sans", sans-serif; text-align: center; }
.chrome { width: 30px; height: 30px; border-radius: 50%; position: relative; background: radial-gradient(circle, #3b82e8 0 6px, #fff 6.500px 9px, transparent 9.500px), conic-gradient(#e33b2e 0 33%, #f6c60f 33% 60%, #2fa84f 60% 85%, #e33b2e 85%); }
.chrome-badge { position: absolute; right: -2px; bottom: -2px; width: 16px; height: 18px; border-radius: 50%; }
.badge-a { background: #8a5a7a; }
.badge-b { background: #6aa83a; }
.badge-c { background: #3a2a22; }

.tray { margin-left: 143px; display: flex; align-items: center; flex: none; }
.tray-people { width: 30px; display: flex; justify-content: center; }
.tray-weather { width: 30px; margin-left: 44px; display: flex; justify-content: center; }
.tray-temp { width: 37px; margin-left: 9px; font-size: 15.500px; white-space: nowrap; }
.tray-icon { width: 30px; display: flex; justify-content: center; }
.tray-first { margin-left: 15px; }
.tray-kbd { width: 40px; display: flex; justify-content: center; }
.tray-lang { width: 29px; margin-left: 10px; font-size: 13px; }
.clock { width: 80px; margin-left: 8px; display: flex; flex-direction: column; align-items: center; gap: 6px; font-size: 13.500px; line-height: 18px; }
.notify { width: 40px; height: 50px; margin-left: 9px; display: flex; align-items: center; justify-content: center; position: relative; }
.notify-count { position: absolute; right: 3px; bottom: 8px; width: 20px; height: 20px; box-sizing: border-box; border: 1px solid #ccc; border-radius: 50%; background: #26292b; font-size: 12px; line-height: 18px; text-align: center; }
```

FILE: script.js
```js
var NS = 'http://www.w3.org/2000/svg';
var sheet = document.getElementById('sheet');

function add(tag, attrs, html) {
  var e = document.createElementNS(NS, tag);
  for (var k in attrs) e.setAttribute(k, attrs[k]);
  if (html !== undefined) e.innerHTML = html;
  sheet.appendChild(e);
  return e;
}
function line(cls, pts) { add('polyline', { 'class': cls, points: pts.join(' ') }); }
function dot(x, y) { add('circle', { cx: x, cy: y, r: 2.6, fill: '#0a4a12' }); }
function sq(x, y, c) { add('rect', { x: x - 2.2, y: y - 2.2, width: 4.4, height: 4.4, fill: c == 'r' ? '#ff4040' : '#4040ff' }); }
function txt(x, y, s, cls, anchor) {
  return add('text', { x: x, y: y, 'class': 't ' + (cls || ''), 'text-anchor': anchor || 'start' }, s);
}
function vtxt(x, y, s) {
  add('text', { x: x, y: y, 'class': 't t-pin', 'text-anchor': 'middle', transform: 'rotate(-90 ' + x + ' ' + y + ')' }, s);
}

// grid
(function () {
  var minor = '', major = '';
  for (var i = -3; i < 21; i++) {
    for (var j = 0; j < 10; j++) {
      var x = 1654 - 84 * (17 - i) + 8.4 * j;
      if (j == 0) major += 'M' + x + ' 132V993'; else minor += 'M' + x + ' 132V993';
    }
  }
  for (i = -1; i < 11; i++) {
    for (j = 0; j < 10; j++) {
      var y = 142 + 84 * i + 8.4 * j;
      if (j == 0) major += 'M219 ' + y + 'H1915'; else minor += 'M219 ' + y + 'H1915';
    }
  }
  add('path', { 'class': 'grid-minor', d: minor });
  add('path', { 'class': 'grid-major', d: major });
  add('rect', { 'class': 'bound', x: 437, y: 142, width: 1260, height: 840 });
})();

// seven segment shapes, in a 34x64 box before the slant
var SEG = {
  a: [6,0, 28,0, 31,3, 28,6, 6,6, 3,3],
  b: [31,3, 34,6, 34,28, 31,31, 28,28, 28,6],
  c: [31,33, 34,36, 34,58, 31,61, 28,58, 28,36],
  d: [6,58, 28,58, 31,61, 28,64, 6,64, 3,61],
  e: [3,33, 6,36, 6,58, 3,61, 0,58, 0,36],
  f: [3,3, 6,6, 6,28, 3,31, 0,28, 0,6],
  g: [6,29, 28,29, 31,32, 28,35, 6,35, 3,32]
};
var LIT = { '0': 'abcdef', '1': 'bc', '6': 'acdefg' };

function digit(ox, oy, d) {
  for (var s in SEG) {
    var p = SEG[s], pts = [];
    for (var i = 0; i < p.length; i += 2) pts.push((ox + p[i] + (64 - p[i + 1]) * 0.06) + ',' + (oy + p[i + 1]));
    add('polygon', { points: pts.join(' '), fill: LIT[d].indexOf(s) >= 0 ? '#00ffff' : '#00008a' });
  }
  add('circle', { cx: ox + 40, cy: oy + 62, r: 3, fill: '#00008a' });
}

function display(ox, oy, num, pinA, pinB, digitColors) {
  add('rect', { x: ox + .5, y: oy + .5, width: 126, height: 100, fill: '#008080', stroke: '#000060' });
  add('rect', { x: ox + 9, y: oy + 7.5, width: 110, height: 81, fill: '#000078' });
  digit(ox + 17, oy + 16, num[0]);
  digit(ox + 72, oy + 16, num[1]);
  txt(ox + 10, oy + 96, 'ABCDEFG', 't-seg');
  txt(ox + 63, oy + 96, 'DP', 't-seg');
  txt(ox + 99, oy + 96, '1 2', 't-seg');
  var xs = [9, 17, 25, 34, 42, 51, 59, 67];
  var names = ['a', 'b', 'c', 'd', 'e', 'f', 'g', 'dp'];
  var cols = 'rbbrrrrr';
  for (var i = 0; i < 8; i++) {
    var x = ox + xs[i] + .5;
    line('stub', [x, oy + 101, x, oy + 109]);
    line('wire', [x, oy + 109, x, oy + 158]);
    dot(x, oy + 158);
    sq(x - 4.4, oy + 108, cols[i]);
    vtxt(x - 2, oy + 140, names[i]);
  }
  [101, 109].forEach(function (rx, n) {
    var x = ox + rx + .5;
    line('stub', [x, oy + 101, x, oy + 109]);
    line('wire', [x, oy + 109, x, oy + 158]);
    dot(x, oy + 158);
    sq(x - 4.4, oy + 108, digitColors[n]);
    vtxt(x - 2, oy + 140, n ? pinB : pinA);
  });
}

function lights(ox, oy, reach, names, fills, cols) {
  add('rect', { 'class': 'body', x: ox + .5, y: oy + .5, width: 34, height: 84 });
  [16.5, 42, 67].forEach(function (cy, i) {
    add('circle', { cx: ox + 17, cy: oy + cy, r: 8, fill: fills[i], stroke: '#800000' });
    var y = oy + cy;
    line('stub', [ox, y, ox - 16, y]);
    line('wire', [ox - 16, y, ox - reach, y]);
    dot(ox - reach, y);
    txt(ox - reach + 9, y - 2, names[i], 't-pin');
    sq(ox - 9, y - 4.7, cols[i]);
  });
}

display(629, 463, '16', '41', '42', 'bb');
display(1041, 294, '06', '11', '12', 'bb');
display(1293, 538, '06', '21', '22', 'bb');
display(1066, 698, '16', '31', '32', 'rb');

lights(990, 294, 42, ['L1', 'L2', 'L3'], ['#3c0000', '#3c2c00', '#00e000'], 'bbr');
lights(797, 470, 33, ['L10', 'L11', 'L12'], ['#e00000', '#3c2c00', '#003000'], 'rbb');
lights(1252, 547, 34, ['L4', 'L5', 'L6'], ['#3c0000', '#e0a000', '#003000'], 'brb');
lights(1017, 698, 42, ['L7', 'L8', 'L9'], ['#e00000', '#3c2c00', '#003000'], 'rbb');

// U1
add('rect', { 'class': 'body', x: 1024.5, y: 453.5, width: 118, height: 227 });

var P0 = [462.3, 470.3, 478.3, 487.3, 495.3, 504.3, 512.3, 520.3];
var P2 = [537.3, 546.3, 554.3, 562.3, 571, 579.3, 588.3, 596.3];
var P3 = [613.3, 621.7, 630.3, 638.3, 646.7, 655.3, 663.7, 672.3];
var P0C = 'brbbbbbb', P2C = 'rbbrrrrr', P3C = 'bbbbrbbb', P1C = 'bbrbrbrb';
var P2N = ['P2.0/A8', 'P2.1/A9', 'P2.2/A10', 'P2.3/A11', 'P2.4/A12', 'P2.5/A13', 'P2.6/A14', 'P2.7/A15'];
var P3N = ['P3.0/RXD', 'P3.1/TXD', 'P3.2/<tspan class="bar">INT0</tspan>', 'P3.3/<tspan class="bar">INT1</tspan>', 'P3.4/T0', 'P3.5/T1', 'P3.6/<tspan class="bar">WR</tspan>', 'P3.7/<tspan class="bar">RD</tspan>'];
var SEGN = ['a', 'b', 'c', 'd', 'e', 'f', 'g', 'dp'];
var P3L = ['11', '12', '21', '22', '31', '32', '41', '42'];

for (var i = 0; i < 8; i++) {
  // port 0 runs across to the resistor pack
  var y = P0[i];
  line('stub', [1143, y, 1158, y]);
  line('wire', [1158, y, 1212, y]);
  line('stub', [1212, y, 1227, y]);
  sq(1147, y - 4, P0C[i]);
  txt(1151, y - 1.5, String(39 - i), 't-pin');
  txt(1137.5, y + 2.500, 'P0.' + i + '/AD' + i, '', 'end');
  txt(1214, y - 1.5, String(i + 2), 't-pin');
  sq(1220, y - 4, P0C[i]);

  y = P2[i];
  line('stub', [1143, y, 1158, y]);
  line('wire', [1158, y, 1200.3, y]);
  dot(1200.3, y);
  sq(1147, y - 4, P2C[i]);
  txt(1151, y - 1.5, String(21 + i), 't-pin');
  txt(1137.5, y + 2.500, P2N[i], '', 'end');
  txt(1184, y - 2, SEGN[i], 't-pin');

  y = P3[i];
  line('stub', [1143, y, 1158, y]);
  line('wire', [1158, y, 1192.3, y]);
  dot(1192.3, y);
  sq(1147, y - 4, P3C[i]);
  txt(1151, y - 1.5, String(10 + i), 't-pin');
  txt(1137.5, y + 2.500, P3N[i], '', 'end');
  txt(1176, y - 2, P3L[i], 't-pin');

  line('stub', [1024, y, 1008, y]);
  line('wire', [1008, y, 940.3, y]);
  dot(940.3, y);
  sq(1018.3, y - 4, P1C[i]);
  txt(1012.5, y - 1.5, String(i + 1), 't-pin');
  txt(1029, y + 2.500, 'P1.' + i);
  txt(957, y - 2, 'L' + (i + 1), 't-pin');
}

// other pins on the left of the chip
[[462.3, 'XTAL1', '19', ''], [487.3, 'XTAL2', '18', ''], [520.3, 'RST', '9', 'r'],
 [562.3, '<tspan class="bar">PSEN</tspan>', '29', 'r'], [571.7, '<tspan class="bar">ALE</tspan>', '30', 'r'], [579.3, '<tspan class="bar">EA</tspan>', '31', 'r']].forEach(function (p) {
  line('stub', [1024, p[0], 1008, p[0]]);
  txt(1029, p[0] + 2.500, p[1]);
  txt(p[2].length == 1 ? 1012.5 : 1009, p[0] - 1.5, p[2], 't-pin');
  if (p[3]) sq(1018.3, p[0] - 4, p[3]);
});
txt(1024, 451, 'U1', 't-ref');
txt(1024, 689, 'AT89C51', 't-val');

// resistor pack
add('rect', { 'class': 'body', x: 1226.5, y: 436.5, width: 20.5, height: 93 });
txt(1226, 434, 'RP1', 't-ref');
txt(1226, 538, 'RESPACK-8', 't-val');
line('wire', [1175, 428, 1175, 445, 1212, 445]);
line('stub', [1212, 445, 1227, 445]);
txt(1214, 443.5, '1', 't-pin');
sq(1220, 441, 'r');
add('polygon', { points: '1175,421.5 1171,428.500 1179,428.500', fill: 'none', stroke: '#0a4a12' });
[['L9', 457], ['L10', 466], ['L11', 474], ['L12', 482]].forEach(function (l) { txt(1184, l[1] + 2, l[0], 't-pin'); });

// crystal and load caps
line('wire', [881.7, 445.3, 921.7, 445.3]);
line('stub', [926, 445.3, 940, 445.3]);
line('wire', [940, 445.3, 990.3, 445.3, 990.3, 462.3, 1008, 462.3]);
line('wire', [881.7, 445.3, 881.7, 495.3, 921.7, 495.3]);
line('stub', [926, 495.3, 940, 495.3]);
line('wire', [940, 495.3, 990.3, 495.3, 990.3, 487.3, 1008, 487.3]);
line('wire', [965.3, 445.3, 965.3, 462.7]);
line('wire', [965.3, 478.3, 965.3, 495.3]);
dot(965.3, 445.3); dot(965.3, 495.3); dot(881.7, 478.3);
[445.3, 495.3].forEach(function (y) {
  line('stub', [921.7, y - 8.500, 921.7, y + 8.500]);
  line('stub', [926, y - 8.500, 926, y + 8.500]);
});
line('stub', [952.7, 462.7, 978.7, 462.7]);
line('stub', [952.7, 478.3, 978.7, 478.3]);
add('rect', { 'class': 'body', x: 957.3, y: 466.3, width: 17.4, height: 8.4 });
txt(915, 434, 'C1', 't-ref');
txt(915, 484, 'C2', 't-ref');
txt(914.5, 461, '33pF', 't-val');
txt(914.5, 511, '33pF', 't-val');
sq(906, 441, 'b');
sq(906, 491, 'b');
vtxt(963, 452, '1');
vtxt(963, 489, '2');

// reset network
line('wire', [881.7, 478.3, 848.3, 478.3, 848.3, 537.3]);
line('wire', [839, 537.3, 856.7, 537.3]);
line('wire', [843, 541.7, 852, 541.7]);
line('wire', [846, 546, 850, 546]);
dot(848.3, 512.3);
line('wire', [848.3, 512.3, 864.3, 512.3, 864.3, 554.3, 873.3, 554.3]);
dot(873.3, 554.3);
line('wire', [873.3, 537.3, 873.3, 579.3, 890.3, 579.3]);
line('wire', [873.3, 537.3, 893.3, 537.3]);
line('wire', [919.3, 537.3, 940.3, 537.3]);
line('wire', [940.3, 579.3, 940.3, 520.3, 1008, 520.3]);
dot(940.3, 537.3); dot(940.3, 579.3);
add('circle', { cx: 896.3, cy: 537.3, r: 3, fill: '#c8c8aa', stroke: '#800000' });
add('circle', { cx: 916.3, cy: 537.3, r: 3, fill: '#c8c8aa', stroke: '#800000' });
line('stub', [895, 531.7, 919, 531.7]);
add('rect', { 'class': 'body', x: 900.3, y: 526.3, width: 13.4, height: 5.4 });
sq(885.3, 533, 'b');
add('circle', { cx: 923.3, cy: 529.3, r: 3, fill: '#e80000' });
sq(927.3, 533, 'r');

add('rect', { 'class': 'body', x: 890.3, y: 576.3, width: 25.4, height: 7 });
txt(890, 573, 'R1', 't-ref');
txt(890, 590, '10k', 't-val');
sq(881, 575, 'b');
sq(922.7, 575, 'r');
line('stub', [915.7, 579.3, 926, 579.3]);
line('wire', [926, 579.3, 952, 579.3]);
line('stub', [952, 579.3, 967, 579.3]);
add('rect', { 'class': 'body', x: 967, y: 571.3, width: 4.7, height: 17 });
add('rect', { x: 976, y: 571.3, width: 4.7, height: 17, fill: '#d86a6a', stroke: '#800000' });
line('stub', [980.7, 579.3, 994, 579.3]);
line('wire', [994, 579.3, 1008, 579.3]);
line('wire', [999.3, 579.3, 999.3, 555]);
add('polygon', { points: '999.3,546.7 995.3,555 1003.3,555', fill: 'none', stroke: '#0a4a12' });
dot(999.3, 579.3);
txt(965.5, 568, 'C3', 't-ref');
txt(965.5, 594.5, '10uF', 't-val');
sq(957, 575, 'r');
sq(990, 575, 'r');

// the x marker left of the first display
add('path', { d: 'M633 440l11 11M644 440l-11 11', stroke: '#333', fill: 'none' });
```
